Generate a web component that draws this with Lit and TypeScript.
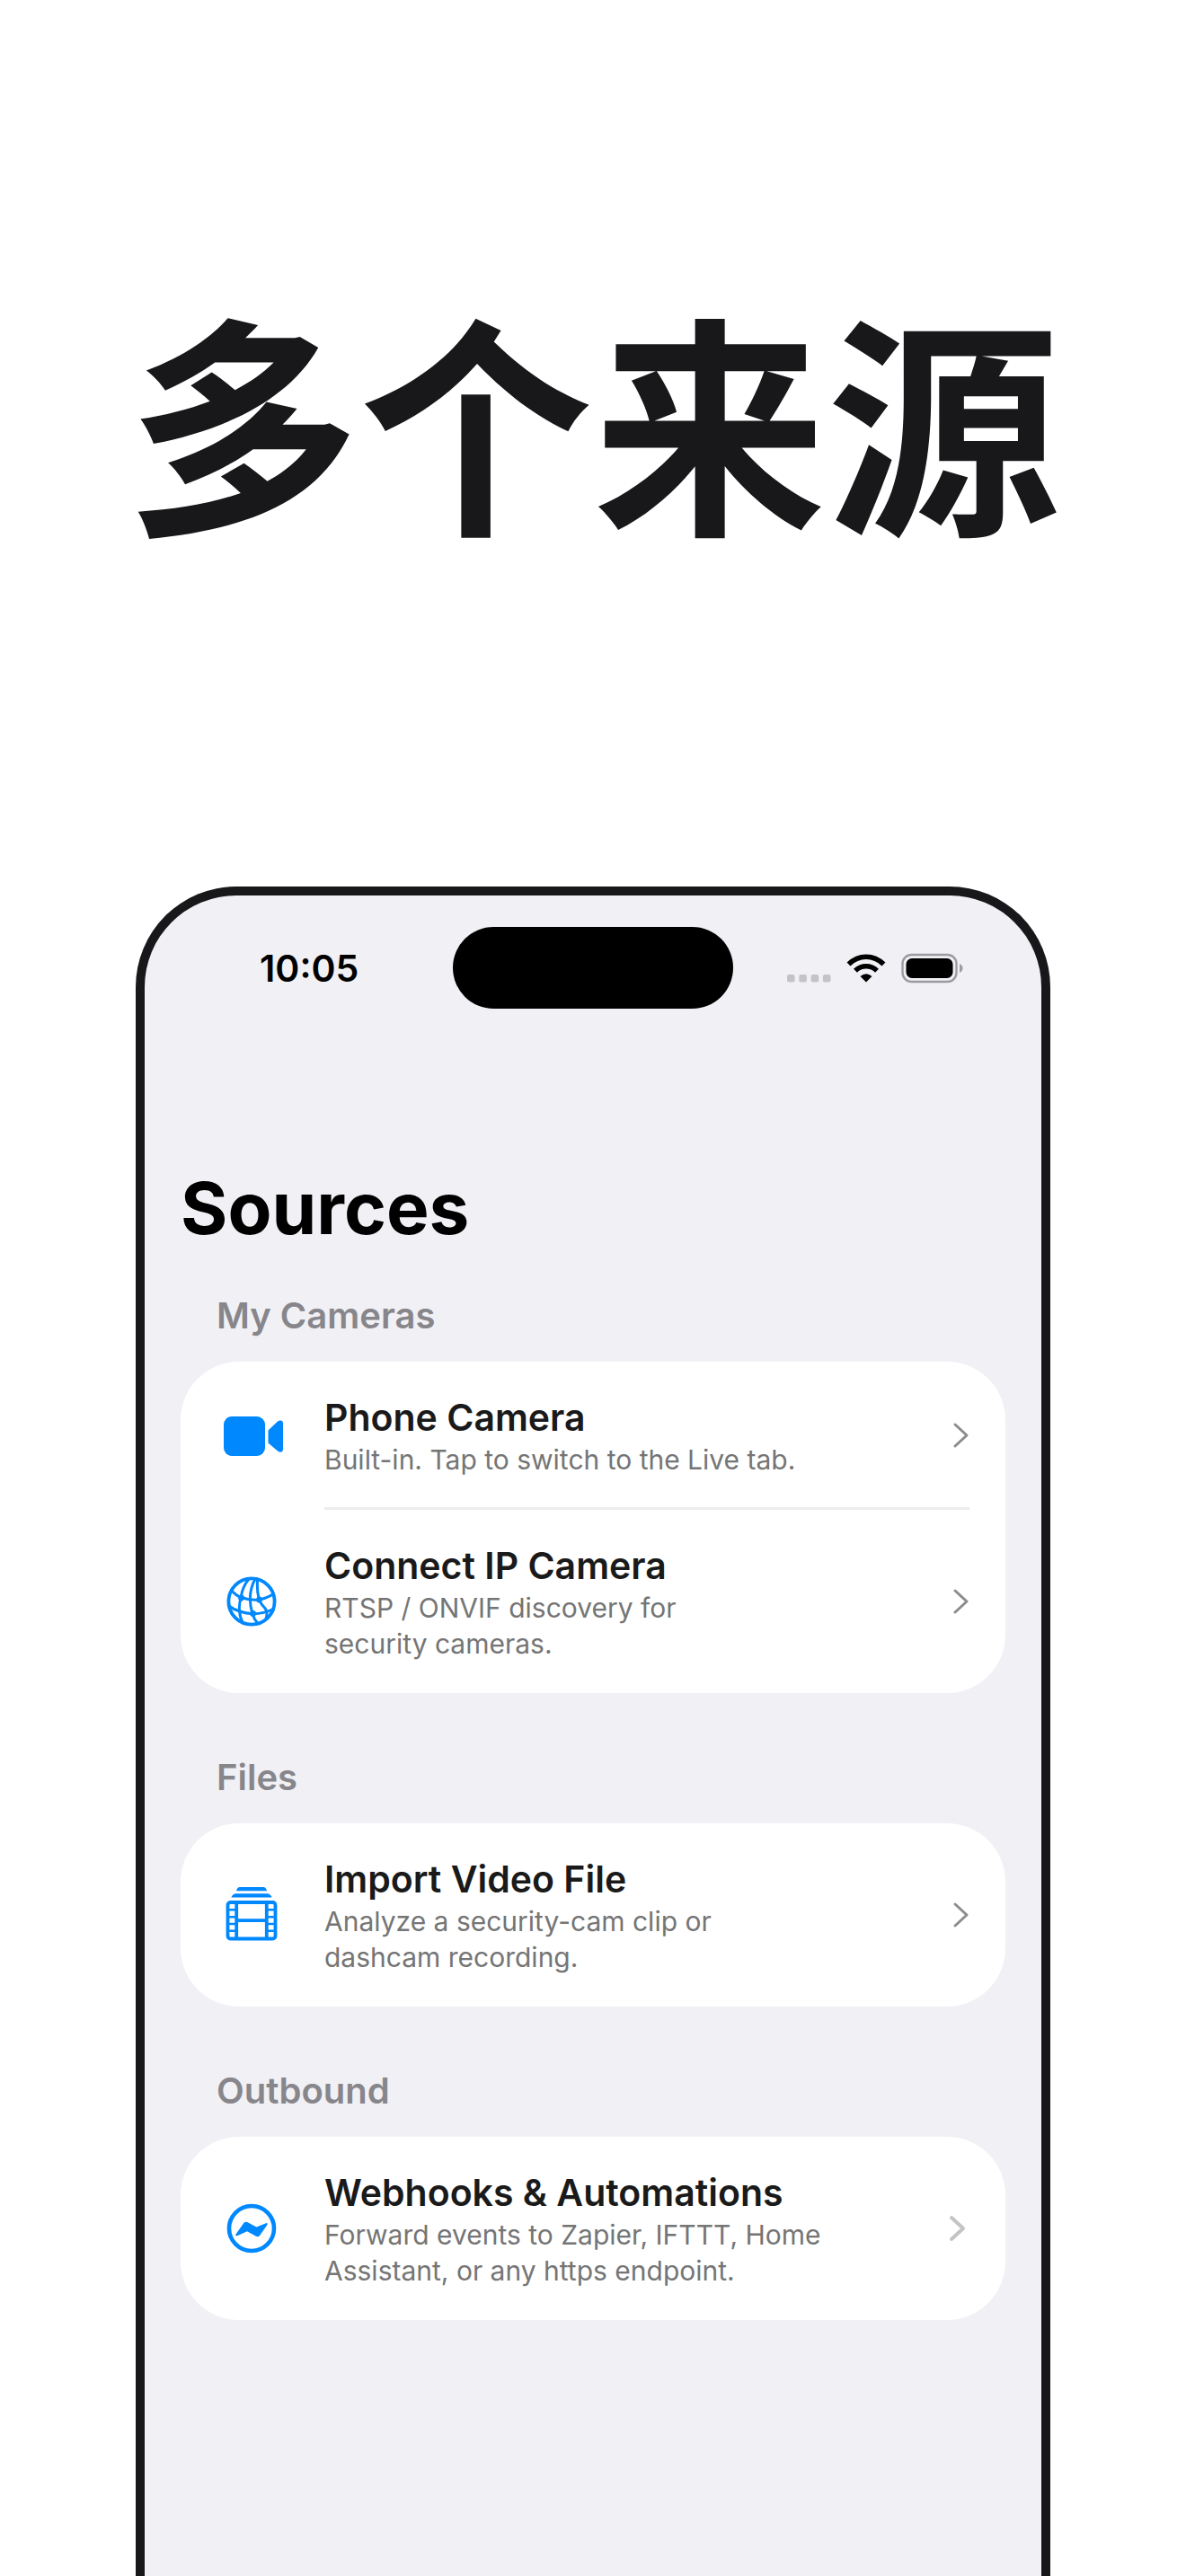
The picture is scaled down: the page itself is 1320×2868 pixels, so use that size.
import { LitElement, html, css, svg } from "lit";
import { customElement, property } from "lit/decorators.js";

type IconName = "camera" | "globe" | "film" | "bolt";

interface Source {
  icon: IconName;
  title: string;
  detail: string[];
  faint?: boolean;
}

interface Group {
  heading: string;
  items: Source[];
}

const GROUPS: Group[] = [
  {
    heading: "My Cameras",
    items: [
      { icon: "camera", title: "Phone Camera", detail: ["Built-in. Tap to switch to the Live tab."] },
      { icon: "globe", title: "Connect IP Camera", detail: ["RTSP / ONVIF discovery for", "security cameras."] },
    ],
  },
  {
    heading: "Files",
    items: [
      { icon: "film", title: "Import Video File", detail: ["Analyze a security-cam clip or", "dashcam recording."] },
    ],
  },
  {
    heading: "Outbound",
    items: [
      {
        icon: "bolt",
        title: "Webhooks & Automations",
        detail: ["Forward events to Zapier, IFTTT, Home", "Assistant, or any https endpoint."],
        faint: true,
      },
    ],
  },
];

const FILM_RUNGS = [29.3, 37.2, 45, 52.8];

const ICONS = {
  camera: svg`
    <rect x="2" y="13" width="46" height="44" rx="9" fill="currentColor"/>
    <path d="M51.500 28.500 L62 18.500 Q64 17 66 17.500 Q68 18 68 20.500 V49.500 Q68 52 66 52.500 Q64 53 62 51.500 L51.500 42.500 Z" fill="currentColor"/>`,
  globe: svg`
    <g fill="none" stroke="currentColor" stroke-width="3" stroke-linecap="round">
      <circle cx="33" cy="35" r="25.600" stroke-width="3.800"/>
      <path d="M10.500 22.500 Q15 28 21.500 30.500 Q31 34 41.500 33 Q50 31.500 56.500 27"/>
      <path d="M8 40 Q13 44 19.700 46 Q27 48.500 34.500 48.700 Q47 48.500 57 43.500"/>
      <path d="M30 10 Q23 18 21.300 30 Q18.500 40 19.700 46 Q20 53 23 58"/>
      <path d="M37 10 Q31.500 20 31.300 32 Q31.500 41 34 48.700 Q36 55 39.500 59"/>
      <path d="M39.700 10 Q38.500 23 41.500 33 Q43.500 38 47.500 42 Q51.500 46 49 55"/>
    </g>
    <g fill="currentColor">
      <circle cx="21.500" cy="31" r="3.400"/>
      <circle cx="41.500" cy="33" r="3.400"/>
      <circle cx="34.500" cy="48.500" r="3.400"/>
    </g>`,
  film: svg`
    <path d="M16 8.200 Q17 4 20 4 H46 Q49 4 50 8.200 Z M10.300 15.500 Q12.500 11.300 15.500 11.300 H50.500 Q53.500 11.300 55.700 15.500 Z" fill="currentColor"/>
    <rect x="6.500" y="21" width="53" height="40.500" rx="3" fill="none" stroke="currentColor" stroke-width="3.800"/>
    <path d="M16.200 20 V62 M49.800 20 V62 M16 41.200 H50" fill="none" stroke="currentColor" stroke-width="3.800"/>
    ${FILM_RUNGS.map(
      (y) => svg`<path d="M6 ${y} H16 M50 ${y} H60" stroke="currentColor" stroke-width="2.600"/>`
    )}`,
  bolt: svg`
    <circle cx="33" cy="35" r="25" fill="none" stroke="currentColor" stroke-width="4.600"/>
    <path d="M15.500 41.500 L24.500 28.800 Q26 27 28.200 28 L38.500 33.500 L49 29.200 Q51.500 28.600 50.500 31 L42 43 Q40.500 45 38 43.800 L28 38.200 L17.500 43 Q14 43.800 15.500 41.500 Z" fill="currentColor"/>`,
};

@customElement("source-row")
export class SourceRow extends LitElement {
  @property({ attribute: false }) source!: Source;
  @property({ type: Boolean }) divided = false;

  static styles = css`
    :host {
      display: block;
    }
    .row {
      display: flex;
      align-items: stretch;
      width: 100%;
      padding: 0 40px;
      color: inherit;
      text-decoration: none;
      box-sizing: border-box;
    }
    .glyph {
      flex: none;
      align-self: center;
      width: 72px;
      height: 70px;
      margin: 0 42px 0 6px;
      color: #0088ff;
    }
    .body {
      flex: 1;
      display: flex;
      align-items: center;
      justify-content: space-between;
      gap: 40px;
      padding: 35px 0;
    }
    .divided {
      padding-bottom: 33px;
      border-bottom: 3px solid #ececee;
    }
    .title {
      display: block;
      font-size: 41px;
      line-height: 54px;
      font-weight: 600;
      color: #1a1a1a;
    }
    .detail {
      display: block;
      font-size: 30px;
      line-height: 40px;
      color: #757575;
    }
    .chevron {
      flex: none;
      width: 20px;
      height: 32px;
      color: #8c8c8c;
    }
    .faint {
      margin-right: 4px;
      color: #c4c4c6;
    }
  `;

  render() {
    const { icon, title, detail, faint } = this.source;
    return html`<a class="row" href="#">
      <svg class="glyph" viewBox="0 0 72 70" aria-hidden="true">${ICONS[icon]}</svg>
      <span class="body ${this.divided ? "divided" : ""}">
        <span>
          <span class="title">${title}</span>
          ${detail.map((line) => html`<span class="detail">${line}</span>`)}
        </span>
        <svg class="chevron ${faint ? "faint" : ""}" viewBox="0 0 20 32" aria-hidden="true">
          <path d="M4 4 L17 16 L4 28" fill="none" stroke="currentColor" stroke-width=${faint ? 4 : 3}
            stroke-linecap="round" stroke-linejoin="round"/>
        </svg>
      </span>
    </a>`;
  }
}

@customElement("status-bar")
export class StatusBar extends LitElement {
  static styles = css`
    :host {
      display: block;
    }
    .bar {
      display: grid;
      grid-template-columns: 1fr 312px 1fr;
      align-items: center;
      padding-top: 35px;
    }
    .time {
      padding-left: 128px;
      font-size: 41px;
      line-height: 54px;
      font-weight: 600;
      color: #000;
    }
    .island {
      height: 91px;
      border-radius: 46px;
      background: #000;
    }
    .signals {
      justify-self: end;
      display: flex;
      align-items: center;
      gap: 17px;
      padding-right: 86px;
    }
    .icon {
      display: block;
      height: 34px;
    }
  `;

  render() {
    return html`<div class="bar">
      <time class="time">10:05</time>
      <div class="island"></div>
      <div class="signals">
        <svg class="icon" width="50" viewBox="0 0 50 34" aria-label="No signal">
          ${[0, 1, 2, 3].map(
            (i) => svg`<rect x=${1 + i * 13.3} y="24" width="8.600" height="8.600" rx="2" fill="#c4c4c8"/>`
          )}
        </svg>
        <svg class="icon" width="44" viewBox="0 0 44 34" aria-label="Wi-Fi">
          <g fill="none" stroke="#000" stroke-width="5.600">
            <path d="M2.500 12.500 Q11 4.200 22 4.200 Q33 4.200 41.500 12.500"/>
            <path d="M10 19.700 Q15 14.800 22 14.800 Q29 14.800 34 19.700"/>
          </g>
          <path d="M15.500 26 Q22 20.500 28.500 26 L22 32.500 Z" fill="#000"/>
        </svg>
        <svg class="icon" width="70" viewBox="0 0 70 34" aria-label="Battery full">
          <rect x="1.500" y="2" width="60" height="30" rx="10" fill="none" stroke="#9c9ca0" stroke-width="2.400"/>
          <rect x="5.500" y="6" width="52" height="22" rx="6.500" fill="#000"/>
          <path d="M65 12 Q68.500 14 68.500 17 Q68.500 20 65 22 Z" fill="#9c9ca0"/>
        </svg>
      </div>
    </div>`;
  }
}

@customElement("app-root")
export class AppRoot extends LitElement {
  static styles = css`
    :host {
      display: block;
      font-family: Inter, "Noto Sans CJK SC", "Liberation Sans", sans-serif;
    }
    .page {
      display: flex;
      flex-direction: column;
      min-height: 100vh;
      padding: 0 151px;
      box-sizing: border-box;
      background: #fff;
    }
    .headline {
      display: flex;
      justify-content: center;
      margin: 0;
      padding: 263px 0 324px;
      font-family: "Noto Sans CJK SC", sans-serif;
      font-size: 260px;
      line-height: 400px;
      font-weight: 700;
      white-space: nowrap;
      color: #18181b;
    }
    .phone {
      flex: 1;
      border: 10px solid #18181b;
      border-bottom: 0;
      border-radius: 112px 112px 0 0;
      background: #f1f0f5;
    }
    .screen {
      padding: 172px 40px 80px;
    }
    .heading {
      margin: 0 0 43px;
      font-size: 80px;
      line-height: 100px;
      font-weight: 700;
      color: #000;
    }
    .groups {
      display: flex;
      flex-direction: column;
      gap: 67px;
    }
    .label {
      margin: 0 40px 24px;
      font-size: 40px;
      line-height: 54px;
      font-weight: 600;
      color: #87868b;
    }
    .card {
      margin: 0;
      padding: 0;
      list-style: none;
      border-radius: 65px;
      background: #fff;
    }
  `;

  render() {
    return html`<div class="page">
      <h1 class="headline" lang="zh-CN">多个来源</h1>
      <main class="phone">
        <status-bar></status-bar>
        <div class="screen">
          <h2 class="heading">Sources</h2>
          <div class="groups">
            ${GROUPS.map(
              (group) => html`<section>
                <h3 class="label">${group.heading}</h3>
                <ul class="card">
                  ${group.items.map(
                    (item, i) => html`<li>
                      <source-row .source=${item} ?divided=${i < group.items.length - 1}></source-row>
                    </li>`
                  )}
                </ul>
              </section>`
            )}
          </div>
        </div>
      </main>
    </div>`;
  }
}
